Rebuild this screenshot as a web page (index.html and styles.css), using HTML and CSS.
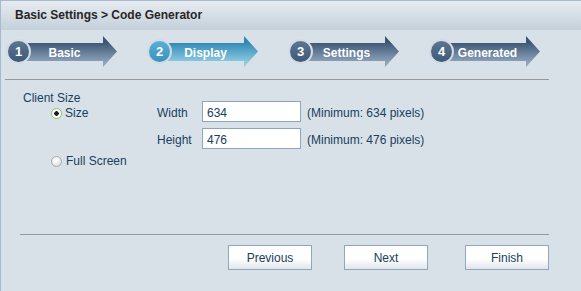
FILE: index.html
```html
<!DOCTYPE html>
<html>
<head>
<meta charset="utf-8">
<link rel="stylesheet" href="styles.css">
</head>
<body>
<div class="panel">
  <div class="header">Basic Settings &gt; Code Generator</div>
  <div class="steps">
    <div class="step"><span class="num">1</span><span class="arrow">Basic</span></div>
    <div class="step active"><span class="num">2</span><span class="arrow">Display</span></div>
    <div class="step"><span class="num">3</span><span class="arrow">Settings</span></div>
    <div class="step"><span class="num">4</span><span class="arrow">Generated</span></div>
  </div>
  <div class="rule top-rule"></div>
  <div class="form">
    <div class="group-title">Client Size</div>
    <div class="grid">
      <div class="cell opt"><span class="radio checked"></span>Size</div>
      <div class="cell">Width</div>
      <div class="cell"><input class="field" type="text" value="634"></div>
      <div class="cell hint">(Minimum: 634 pixels)</div>
      <div class="cell"></div>
      <div class="cell">Height</div>
      <div class="cell"><input class="field" type="text" value="476"></div>
      <div class="cell hint">(Minimum: 476 pixels)</div>
      <div class="cell opt last"><span class="radio"></span>Full Screen</div>
    </div>
  </div>
  <div class="footer">
    <div class="rule bottom-rule"></div>
    <div class="buttons">
      <button class="btn">Previous</button>
      <button class="btn">Next</button>
      <button class="btn finish">Finish</button>
    </div>
  </div>
</div>
</body>
</html>
```

FILE: styles.css
```css
* { box-sizing: border-box; }
html, body { margin: 0; padding: 0; }
body {
  font-family: "Liberation Sans", Arial, sans-serif;
  font-size: 12px;
  color: #183e60;
  background: #d9e1e8;
}
.panel {
  width: 581px;
  height: 291px;
  border-left: 1px solid #a7bacd;
  border-top: 1px solid #a7bacd;
  background: #d9e1e8;
  display: flex;
  flex-direction: column;
}
.header {
  height: 29px;
  line-height: 29px;
  padding-left: 14px;
  font-weight: bold;
  color: #262626;
  background: linear-gradient(#e6ebf0, #c4d0db);
}
.steps {
  display: flex;
  gap: 30px;
  padding: 6px 0 0 5px;
}
.step {
  display: flex;
  align-items: center;
  width: 111px;
  height: 31px;
}
.num {
  flex: none;
  width: 25px;
  height: 25px;
  border-radius: 50%;
  border: 2px solid #d3dce5;
  background: linear-gradient(#5b7593, #3f5a78);
  color: #fff;
  font-weight: bold;
  font-size: 13px;
  display: flex;
  align-items: center;
  justify-content: center;
  margin-right: -5px;
  z-index: 1;
}
.arrow {
  flex: 1;
  align-self: stretch;
  display: flex;
  align-items: center;
  justify-content: center;
  padding: 2px 14px 0 0;
  color: #fff;
  font-weight: bold;
  background: linear-gradient(#3b5675 20%, #8ea4bb 85%);
  clip-path: polygon(0 7px, calc(100% - 14px) 7px, calc(100% - 14px) 0, 100% 50%, calc(100% - 14px) 100%, calc(100% - 14px) 25px, 0 25px);
}
.step.active .num {
  background: linear-gradient(#58afd6, #3a92bf);
}
.step.active .arrow {
  background: linear-gradient(#2f88b4 20%, #8fcbe3 85%);
}
.rule {
  height: 1px;
  background: #999;
}
.top-rule {
  margin: 12px 32px 0 4px;
}
.form {
  flex: 1;
  padding: 13px 0 0 22px;
}
.group-title {
  height: 8px;
  line-height: 10px;
}
.grid {
  margin-left: 28px;
  display: grid;
  grid-template-columns: 106px 45px 99px auto;
  grid-template-rows: 21px 21px 12px;
  row-gap: 6px;
}
.cell {
  height: 21px;
  line-height: 25px;
  white-space: nowrap;
}
.hint { padding-left: 6px; }
.opt.last {
  grid-column: 1 / span 2;
  height: 12px;
  line-height: 13px;
}
.radio {
  display: inline-block;
  width: 11px;
  height: 11px;
  border-radius: 50%;
  border: 1px solid #a3abb3;
  background: radial-gradient(circle at 40% 35%, #ffffff 20%, #cfd4d9 90%);
  vertical-align: -2px;
  margin-right: 3px;
}
.opt.last .radio { margin-right: 4px; }
.radio.checked {
  border-color: #8dbb7c;
  background: radial-gradient(circle, #1d1d1d 0 2px, #ffffff 2.5px);
  box-shadow: 0 0 0 1px #d3e6c8;
}
.field {
  display: block;
  width: 99px;
  height: 21px;
  margin: 0;
  border: 1px solid #8ea5bb;
  background: #fff;
  padding: 3px 0 0 4px;
  font: 12px "Liberation Sans", Arial, sans-serif;
  color: #183e60;
  outline: none;
}
.footer {
  padding-bottom: 21px;
}
.bottom-rule {
  margin: 0 32px 0 19px;
}
.buttons {
  display: flex;
  justify-content: flex-end;
  gap: 32px;
  padding-right: 32px;
  margin-top: 10px;
}
.btn {
  width: 84px;
  height: 25px;
  margin: 0;
  padding: 1px 0 0;
  border: 1px solid #8fa8bf;
  background: linear-gradient(#ffffff 55%, #e1e6eb);
  font: 12px "Liberation Sans", Arial, sans-serif;
  color: #183e60;
  cursor: pointer;
}
.btn.finish { margin-left: 5px; }
```
